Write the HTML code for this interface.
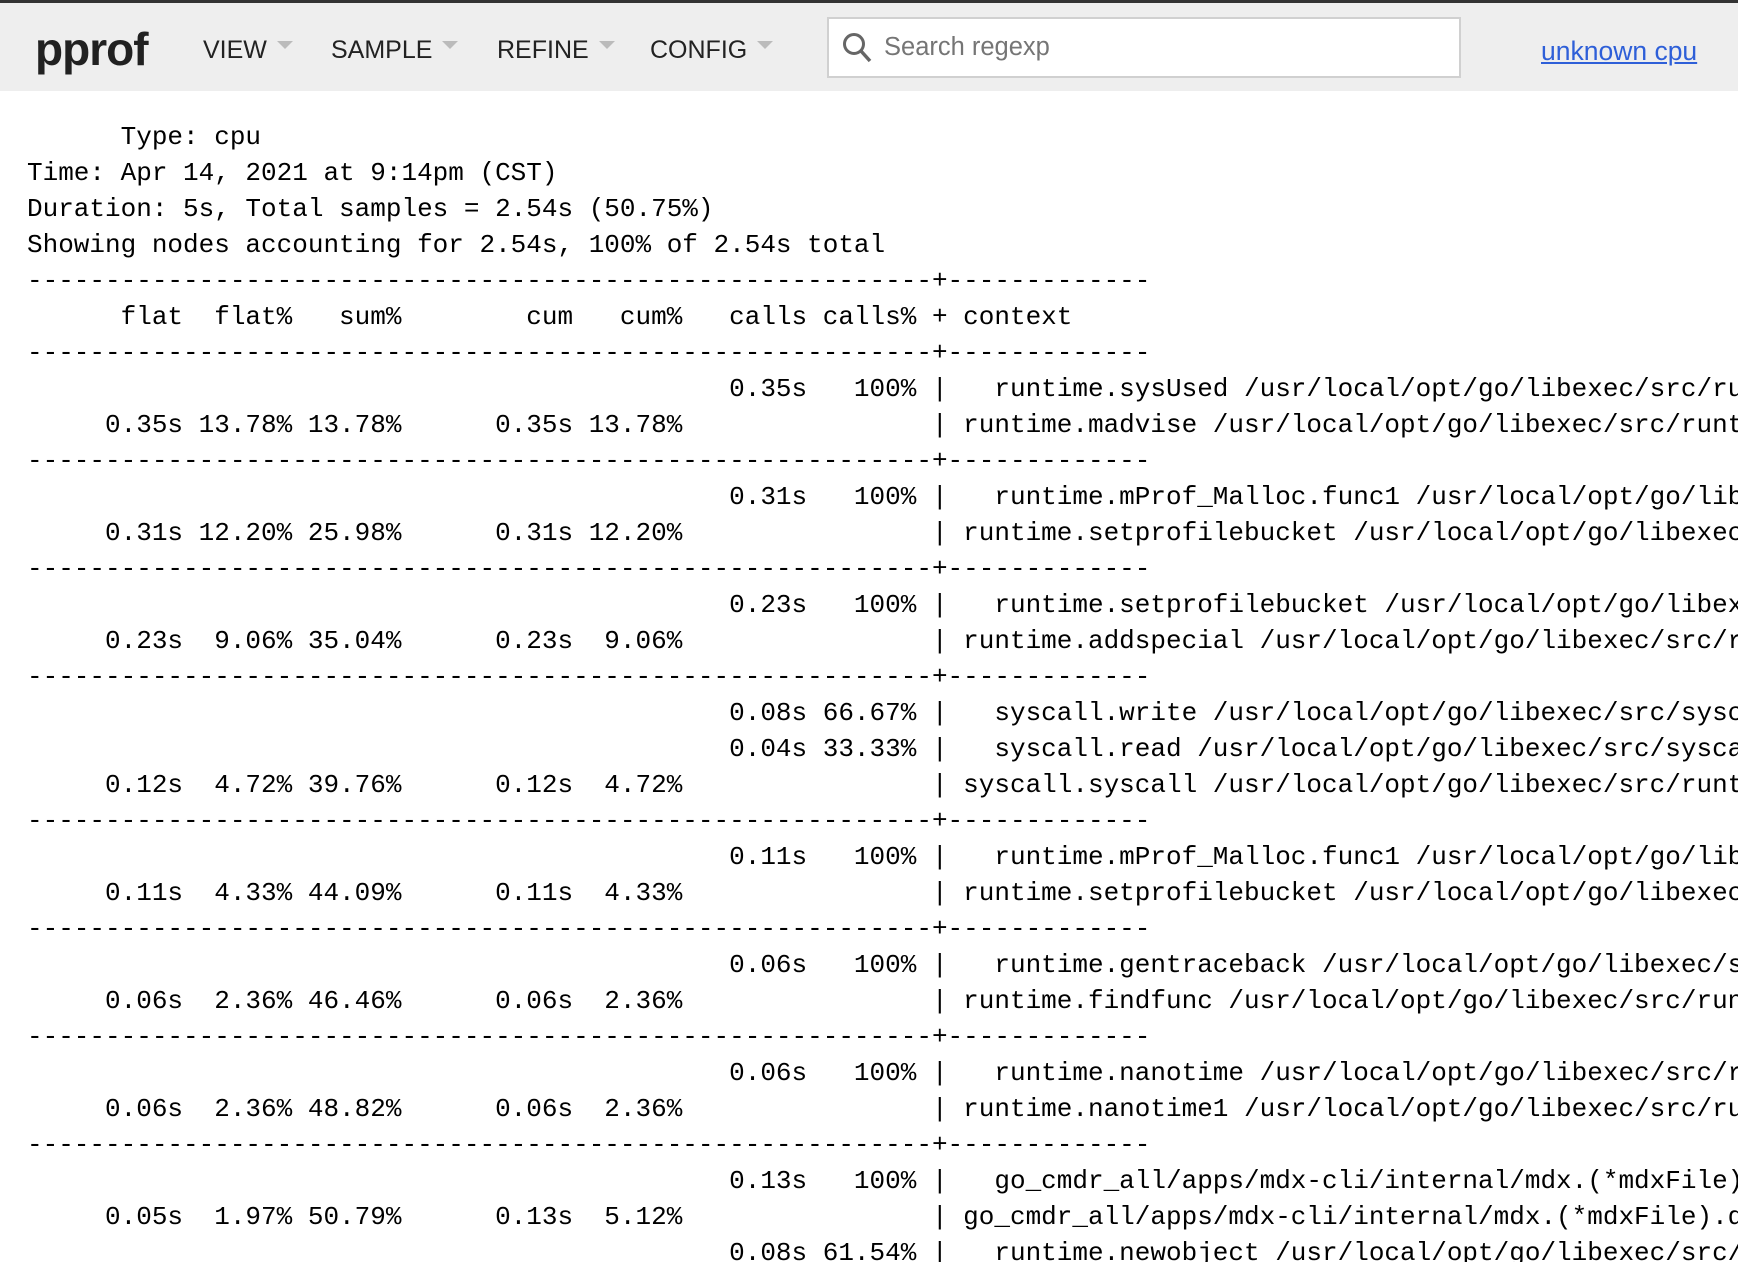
<!DOCTYPE html>
<html><head><meta charset="utf-8"><style>
html,body{margin:0;padding:0;width:1738px;height:1262px;overflow:hidden;background:#fff}
.top{height:3px;background:#333}
.hdr{position:relative;height:88px;background:#eeeeee;font-family:"Liberation Sans",sans-serif}
.logo{position:absolute;left:35px;top:19px;font-size:46px;font-weight:bold;color:#212121;letter-spacing:-1px}
.m{position:absolute;top:33px;font-size:25px;color:#222}
.m:after{content:"";display:inline-block;margin-left:10px;vertical-align:middle;border-left:8px solid transparent;border-right:8px solid transparent;border-top:8px solid #bbb;position:relative;top:-6px}
.search{position:absolute;left:827px;top:14px;width:634px;height:61px;box-sizing:border-box;background:#fff;border:2px solid #d0d0d0}
.search span{position:absolute;left:55px;top:14px;font-size:25.5px;color:#757575}
.search svg{position:absolute;left:12px;top:12px}
.link{position:absolute;left:1541px;top:33px;font-size:26.5px;color:#2e5fd8;text-decoration:underline}
pre{margin:0;padding:28px 0 0 27px;font-family:"Liberation Mono",monospace;font-size:26px;line-height:36px;color:#000;white-space:pre}
</style></head><body>
<div class="top"></div>
<div class="hdr">
<div class="logo">pprof</div>
<div class="m" style="left:203px">VIEW</div>
<div class="m" style="left:331px">SAMPLE</div>
<div class="m" style="left:497px">REFINE</div>
<div class="m" style="left:650px">CONFIG</div>
<div class="search"><svg width="34" height="36" viewBox="0 0 34 36"><circle cx="13" cy="13" r="9.5" fill="none" stroke="#666" stroke-width="3"/><line x1="20" y1="20" x2="29" y2="30" stroke="#666" stroke-width="3.5"/></svg><span>Search regexp</span></div>
<div class="link">unknown cpu</div>
</div>
<pre>      Type: cpu
Time: Apr 14, 2021 at 9:14pm (CST)
Duration: 5s, Total samples = 2.54s (50.75%)
Showing nodes accounting for 2.54s, 100% of 2.54s total
----------------------------------------------------------+-------------
      flat  flat%   sum%        cum   cum%   calls calls% + context
----------------------------------------------------------+-------------
                                             0.35s   100% |   runtime.sysUsed /usr/local/opt/go/libexec/src/runtime/mem_darwin.go
     0.35s 13.78% 13.78%      0.35s 13.78%                | runtime.madvise /usr/local/opt/go/libexec/src/runtime/sys_darwin.go
----------------------------------------------------------+-------------
                                             0.31s   100% |   runtime.mProf_Malloc.func1 /usr/local/opt/go/libexec/src/runtime/mprof.go
     0.31s 12.20% 25.98%      0.31s 12.20%                | runtime.setprofilebucket /usr/local/opt/go/libexec/src/runtime/mheap.go
----------------------------------------------------------+-------------
                                             0.23s   100% |   runtime.setprofilebucket /usr/local/opt/go/libexec/src/runtime/mheap.go
     0.23s  9.06% 35.04%      0.23s  9.06%                | runtime.addspecial /usr/local/opt/go/libexec/src/runtime/mheap.go
----------------------------------------------------------+-------------
                                             0.08s 66.67% |   syscall.write /usr/local/opt/go/libexec/src/syscall/zsyscall_darwin_amd64.go
                                             0.04s 33.33% |   syscall.read /usr/local/opt/go/libexec/src/syscall/zsyscall_darwin_amd64.go
     0.12s  4.72% 39.76%      0.12s  4.72%                | syscall.syscall /usr/local/opt/go/libexec/src/runtime/sys_darwin.go
----------------------------------------------------------+-------------
                                             0.11s   100% |   runtime.mProf_Malloc.func1 /usr/local/opt/go/libexec/src/runtime/mprof.go
     0.11s  4.33% 44.09%      0.11s  4.33%                | runtime.setprofilebucket /usr/local/opt/go/libexec/src/runtime/mheap.go
----------------------------------------------------------+-------------
                                             0.06s   100% |   runtime.gentraceback /usr/local/opt/go/libexec/src/runtime/traceback.go
     0.06s  2.36% 46.46%      0.06s  2.36%                | runtime.findfunc /usr/local/opt/go/libexec/src/runtime/symtab.go
----------------------------------------------------------+-------------
                                             0.06s   100% |   runtime.nanotime /usr/local/opt/go/libexec/src/runtime/time_nofake.go
     0.06s  2.36% 48.82%      0.06s  2.36%                | runtime.nanotime1 /usr/local/opt/go/libexec/src/runtime/sys_darwin.go
----------------------------------------------------------+-------------
                                             0.13s   100% |   go_cmdr_all/apps/mdx-cli/internal/mdx.(*mdxFile).decode
     0.05s  1.97% 50.79%      0.13s  5.12%                | go_cmdr_all/apps/mdx-cli/internal/mdx.(*mdxFile).decode
                                             0.08s 61.54% |   runtime.newobject /usr/local/opt/go/libexec/src/runtime/malloc.go
</pre>
</body></html>
